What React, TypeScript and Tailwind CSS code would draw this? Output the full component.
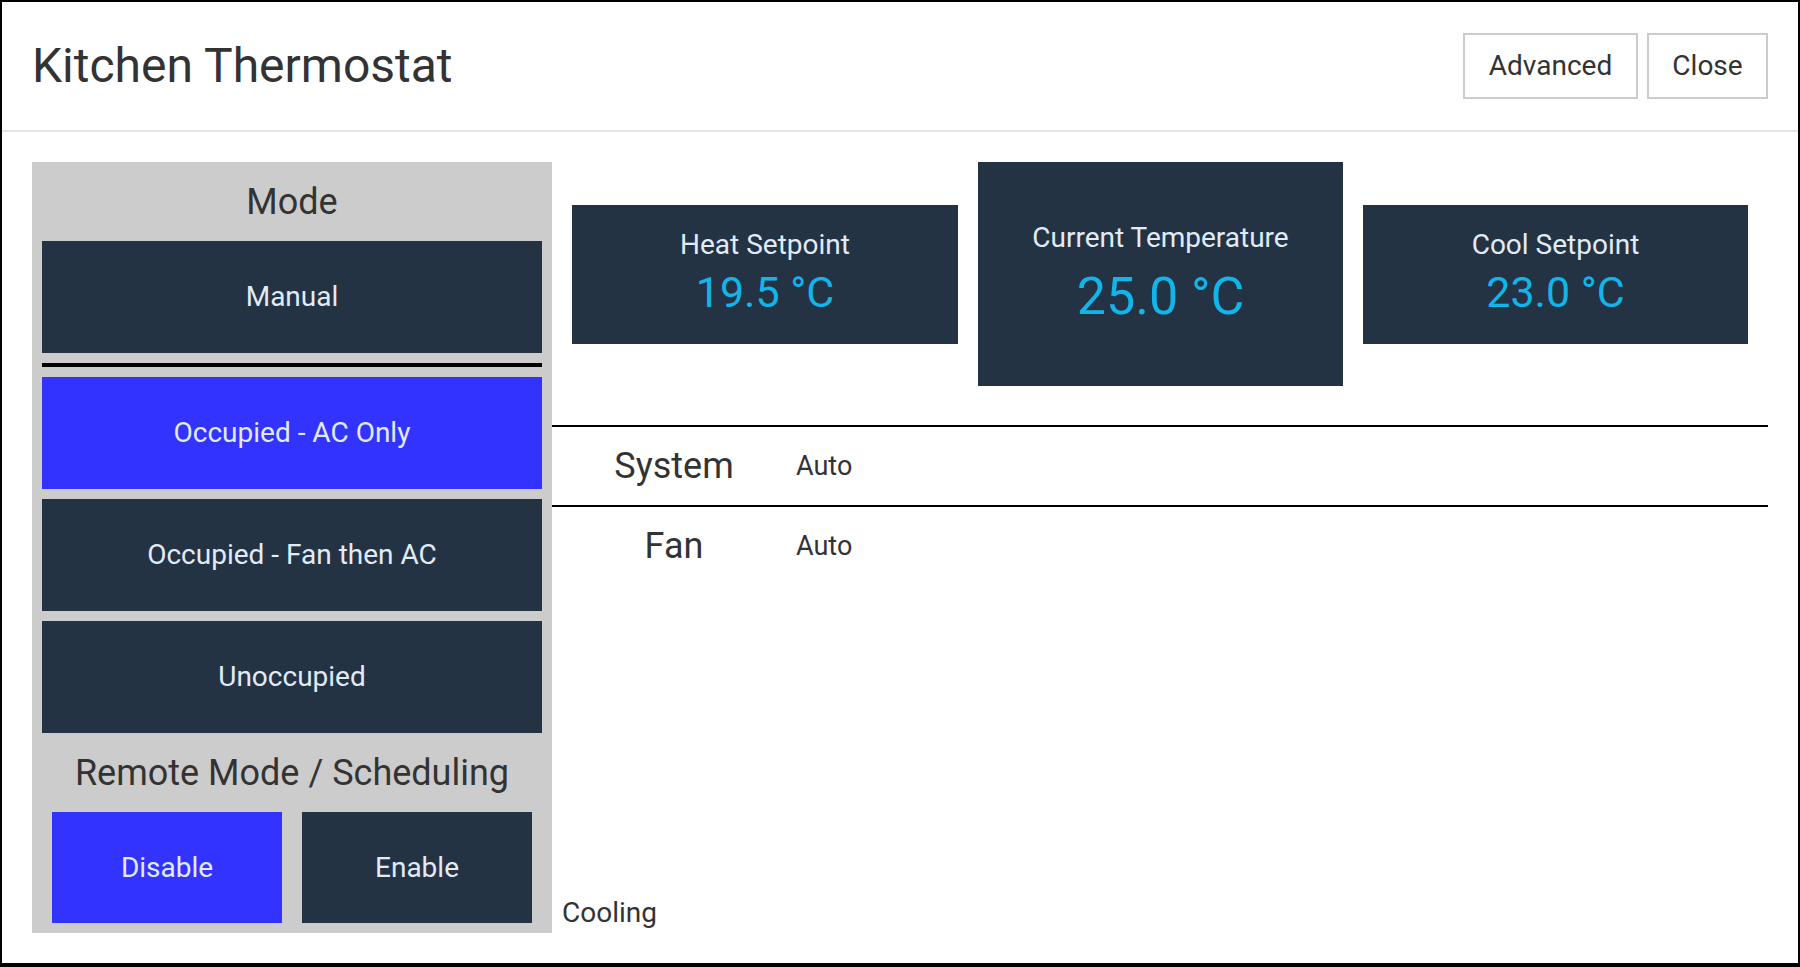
import React from "react";

const font = { fontFamily: "Roboto, 'Liberation Sans', sans-serif" };

type ModeBtn = { label: string; active?: boolean };

function PanelButton({ label, active, className = "" }: ModeBtn & { className?: string }) {
  return (
    <button
      className={`flex items-center justify-center text-[28px] leading-[34px] text-[#e1ebf7] ${
        active ? "bg-[#3333ff]" : "bg-[#233344]"
      } ${className}`}
    >
      {label}
    </button>
  );
}

function SetpointBox({ title, value, className = "" }: { title: string; value: string; className?: string }) {
  return (
    <div className={`flex h-[139px] flex-col items-center justify-center bg-[#233344] ${className}`}>
      <div className="text-[28px] leading-[34px] text-[#e1ebf7]">{title}</div>
      <div className="mt-[4px] mb-[3px] text-[43px] leading-[52px] text-[#12b5ea]">{value}</div>
    </div>
  );
}

export default function App() {
  const modes: ModeBtn[] = [
    { label: "Occupied - AC Only", active: true },
    { label: "Occupied - Fan then AC" },
    { label: "Unoccupied" },
  ];

  const rows = [
    { name: "System", value: "Auto" },
    { name: "Fan", value: "Auto" },
  ];

  return (
    <div style={font} className="h-[967px] w-[1800px] bg-black px-[2px] pt-[2px] pb-[4px]">
      <div className="flex h-full flex-col bg-white">
        {/* header */}
        <div className="flex h-[130px] items-center justify-between border-b-2 border-[#e5e5e5] px-[30px]">
          <h1 className="text-[48px] font-normal text-[#333333]">Kitchen Thermostat</h1>
          <div className="flex gap-[9px]">
            <button className="h-[66px] w-[175px] border-2 border-[#cccccc] text-[28px] text-[#333333]">
              Advanced
            </button>
            <button className="h-[66px] w-[121px] border-2 border-[#cccccc] text-[28px] text-[#333333]">
              Close
            </button>
          </div>
        </div>

        {/* body */}
        <div className="flex px-[30px] pt-[30px]">
          {/* left panel */}
          <div className="flex w-[520px] flex-col bg-[#cccccc] px-[10px] pb-[10px]">
            <div className="flex h-[79px] items-center justify-center text-[36px] text-[#333333]">Mode</div>
            <PanelButton label="Manual" className="h-[112px]" />
            <div className="my-[10px] h-[4px] bg-black" />
            <div className="flex flex-col gap-[10px]">
              {modes.map((m) => (
                <PanelButton key={m.label} label={m.label} active={m.active} className="h-[112px]" />
              ))}
            </div>
            <div className="flex h-[79px] items-center justify-center text-[36px] text-[#333333]">
              Remote Mode / Scheduling
            </div>
            <div className="flex gap-[20px] px-[10px]">
              <PanelButton label="Disable" active className="h-[111px] flex-1" />
              <PanelButton label="Enable" className="h-[111px] flex-1" />
            </div>
          </div>

          {/* right side */}
          <div className="flex flex-1 flex-col">
            <div className="flex items-center gap-[20px] px-[20px]">
              <SetpointBox title="Heat Setpoint" value="19.5 °C" className="w-[386px]" />
              <div className="flex h-[224px] w-[365px] flex-col items-center justify-center bg-[#233344]">
                <div className="text-[28px] leading-[34px] text-[#e1ebf7]">Current Temperature</div>
                <div className="mt-[12px] text-[52px] leading-[60px] text-[#12b5ea]">25.0 °C</div>
              </div>
              <SetpointBox title="Cool Setpoint" value="23.0 °C" className="w-[385px]" />
            </div>

            <div className="mt-[39px] border-t-2 border-black">
              {rows.map((r, i) => (
                <div
                  key={r.name}
                  className={`grid h-[78px] grid-cols-[244px_1fr] items-center ${
                    i === 0 ? "box-content border-b-2 border-black" : ""
                  }`}
                >
                  <div className="text-center text-[36px] leading-[42px] text-[#333333]">{r.name}</div>
                  <div className="text-[27px] leading-[34px] text-[#333333]">{r.value}</div>
                </div>
              ))}
            </div>

            <div className="mt-auto mb-[3px] pl-[10px] text-[28px] leading-[34px] text-[#333333]">Cooling</div>
          </div>
        </div>
      </div>
    </div>
  );
}
